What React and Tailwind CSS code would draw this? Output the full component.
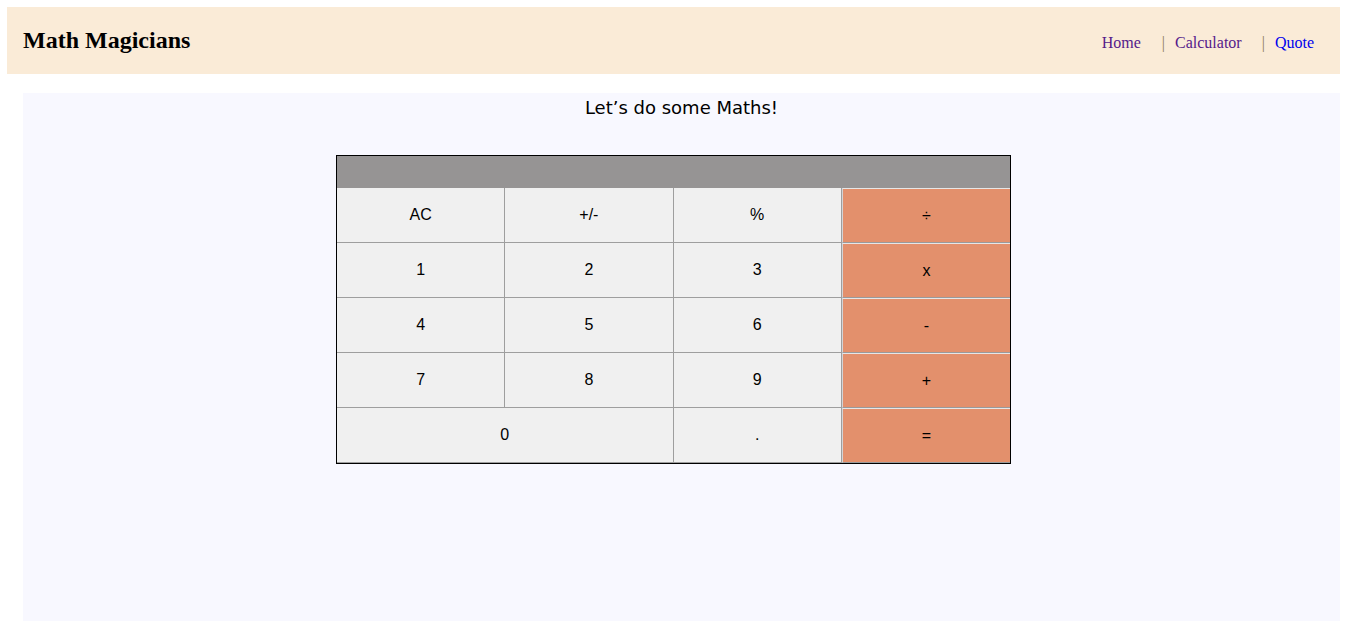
import React from "react";

const rows = [
  ["AC", "+/-", "%", "÷"],
  ["1", "2", "3", "x"],
  ["4", "5", "6", "-"],
  ["7", "8", "9", "+"],
];

function Cell({ label, op, span }) {
  const base =
    "h-[55px] flex items-center justify-center text-[16px] text-black box-border";
  const cls = op
    ? `${base} bg-[#e3906c] border-t border-l border-t-[#e6e6e6] border-l-[#d4d4d4] border-b border-b-[#9a9a9a]`
    : `${base} bg-[#f0f0f0] border-r border-b border-[#9e9e9e]`;
  return <div className={`${cls} ${span ? "col-span-2" : ""}`}>{label}</div>;
}

export default function App() {
  return (
    <div className="w-[1347px] min-h-[621px] bg-white overflow-hidden" style={{ fontFamily: "'Liberation Serif', serif" }}>
      <header className="mx-[7px] mt-[7px] h-[67px] bg-[#faebd7] flex items-center justify-between pl-4 pr-[26px]">
        <h1 className="text-[24px] font-bold text-black leading-none -mt-[1px]">Math Magicians</h1>
        <nav className="flex items-center text-[16px] mt-[4px]">
          <a className="text-[#551a8b]">Home</a>
          <span className="text-[#8b7a5a] ml-[21px] mr-[10px]">|</span>
          <a className="text-[#551a8b]">Calculator</a>
          <span className="text-[#8b7a5a] ml-[20px] mr-[10px]">|</span>
          <a className="text-[#0000ee]">Quote</a>
        </nav>
      </header>
      <main className="ml-[23px] mr-[7px] mt-[19px] h-[528px] bg-[#f8f8ff] pt-[3px]">
        <h2
          className="text-center text-[18px] text-black leading-[24px]"
          style={{ fontFamily: "'Comic Sans MS', 'DejaVu Sans', sans-serif" }}
        >
          Let’s do some Maths!
        </h2>
        <div
          className="ml-[313px] mt-[35px] w-[675px] border border-black"
          style={{ fontFamily: "'Liberation Sans', Arial, sans-serif" }}
        >
          <div className="h-[32px] bg-[#969494]" />
          <div className="grid grid-cols-4">
            {rows.map((r) =>
              r.map((l, i) => <Cell key={l} label={l} op={i === 3} />)
            )}
            <Cell label="0" span />
            <Cell label="." />
            <Cell label="=" op />
          </div>
        </div>
      </main>
    </div>
  );
}
